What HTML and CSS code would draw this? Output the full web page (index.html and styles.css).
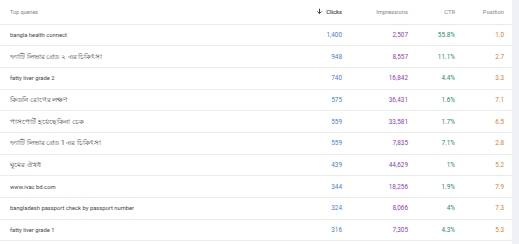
FILE: index.html
```html
<!DOCTYPE html>
<html lang="en">
<head>
    <meta charset="UTF-8">
    <title>Top queries</title>
    <link rel="stylesheet" href="styles.css">
</head>
<body>
    <div class="page">
        <div class="table">
            <div class="row head">
                <div class="cell query">Top queries</div>
                <div class="cell num sorted">
                    <svg class="arrow" viewBox="0 0 10 10" width="7" height="7"><path d="M5 1v7M2 5l3 3 3-3" fill="none" stroke="#3c4043" stroke-width="1.4"/></svg>
                    Clicks
                </div>
                <div class="cell num">Impressions</div>
                <div class="cell num">CTR</div>
                <div class="cell num">Position</div>
            </div>

            <div class="row">
                <div class="cell query">bangla health connect</div>
                <div class="cell num clicks">1,400</div>
                <div class="cell num impr">2,507</div>
                <div class="cell num ctr">55.8%</div>
                <div class="cell num pos">1.0</div>
            </div>
            <div class="row">
                <div class="cell query bn">ফ্যাটি লিভার গ্রেড ২ এর চিকিৎসা</div>
                <div class="cell num clicks">948</div>
                <div class="cell num impr">8,557</div>
                <div class="cell num ctr">11.1%</div>
                <div class="cell num pos">2.7</div>
            </div>
            <div class="row">
                <div class="cell query">fatty liver grade 2</div>
                <div class="cell num clicks">740</div>
                <div class="cell num impr">16,842</div>
                <div class="cell num ctr">4.4%</div>
                <div class="cell num pos">3.3</div>
            </div>
            <div class="row">
                <div class="cell query bn">কিডনি রোগের লক্ষণ</div>
                <div class="cell num clicks">575</div>
                <div class="cell num impr">36,431</div>
                <div class="cell num ctr">1.6%</div>
                <div class="cell num pos">7.1</div>
            </div>
            <div class="row">
                <div class="cell query bn">পাসপোর্ট হয়েছে কিনা চেক</div>
                <div class="cell num clicks">559</div>
                <div class="cell num impr">33,581</div>
                <div class="cell num ctr">1.7%</div>
                <div class="cell num pos">6.5</div>
            </div>
            <div class="row">
                <div class="cell query bn">ফ্যাটি লিভার গ্রেড 1 এর চিকিৎসা</div>
                <div class="cell num clicks">559</div>
                <div class="cell num impr">7,835</div>
                <div class="cell num ctr">7.1%</div>
                <div class="cell num pos">2.8</div>
            </div>
            <div class="row">
                <div class="cell query bn">ঘুমের ঔষধ</div>
                <div class="cell num clicks">439</div>
                <div class="cell num impr">44,629</div>
                <div class="cell num ctr">1%</div>
                <div class="cell num pos">5.2</div>
            </div>
            <div class="row">
                <div class="cell query">www.ivac bd.com</div>
                <div class="cell num clicks">344</div>
                <div class="cell num impr">18,256</div>
                <div class="cell num ctr">1.9%</div>
                <div class="cell num pos">7.9</div>
            </div>
            <div class="row">
                <div class="cell query">bangladesh passport check by passport number</div>
                <div class="cell num clicks">324</div>
                <div class="cell num impr">8,066</div>
                <div class="cell num ctr">4%</div>
                <div class="cell num pos">7.3</div>
            </div>
            <div class="row">
                <div class="cell query">fatty liver grade 1</div>
                <div class="cell num clicks">316</div>
                <div class="cell num impr">7,305</div>
                <div class="cell num ctr">4.3%</div>
                <div class="cell num pos">5.3</div>
            </div>
        </div>
        <div class="rail"></div>
    </div>
</body>
</html>
```

FILE: styles.css
```css
body, html {
    margin: 0; padding: 0;
    width: 100%; height: 100%;
    background: #fff;
    overflow: hidden;
}

.page {
    display: flex;
    height: 100%;
    font-family: Roboto, "Noto Sans", sans-serif;
}

.table { flex: 1; }
.rail { width: 7px; background: #eef0f5; }

.row {
    display: grid;
    grid-template-columns: 1fr 76px 66px 47px 57px;
    align-items: center;
    height: 21.7px;
    border-bottom: 1px solid #ebebeb;
    box-sizing: border-box;
    font-size: 6.4px;
    color: #444;
}
.row.head { height: 24.6px; color: #80868b; font-size: 5.8px; }

.cell { white-space: nowrap; }
.query { padding-left: 10px; font-size: 5.8px; }
.query.bn { font-size: 6.6px; }
.head .query { font-size: 5.4px; }
.num { text-align: right; }
.row .num:last-child { padding-right: 8px; }

.sorted { color: #3c4043; font-weight: 500; display: flex; justify-content: flex-end; align-items: center; gap: 3px; }
.arrow { display: block; }

.clicks { color: #4a80d0; }
.impr { color: #8a3fb0; }
.ctr { color: #1f8a6a; }
.pos { color: #e0802a; }
```
